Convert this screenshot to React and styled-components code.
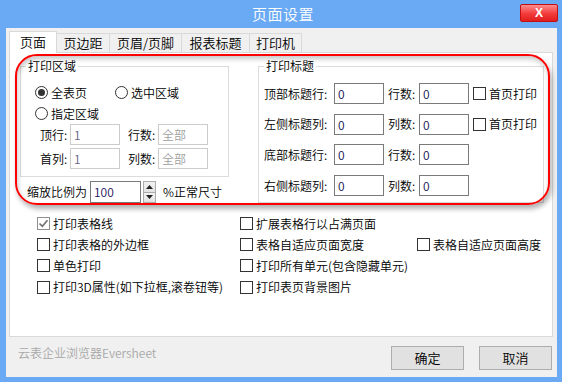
import React from "react";
import styled, { createGlobalStyle } from "styled-components";

const GlobalStyle = createGlobalStyle`
  html, body {
    margin: 0;
    padding: 0;
    background: #ffffff;
  }
  * {
    box-sizing: border-box;
  }
`;

const FONT = `"Noto Sans CJK SC", "Microsoft YaHei", "Noto Sans", sans-serif`;

const titleRows = [
  { label: "顶部标题行:", count: "行数:", firstPage: true },
  { label: "左侧标题列:", count: "列数:", firstPage: true },
  { label: "底部标题行:", count: "行数:", firstPage: false },
  { label: "右侧标题列:", count: "列数:", firstPage: false },
];

const options = [
  { text: "打印表格线", checked: true },
  { text: "扩展表格行以占满页面" },
  null,
  { text: "打印表格的外边框" },
  { text: "表格自适应页面宽度" },
  { text: "表格自适应页面高度" },
  { text: "单色打印" },
  { text: "打印所有单元(包含隐藏单元)" },
  null,
  { text: "打印3D属性(如下拉框,滚卷钮等)" },
  { text: "打印表页背景图片" },
  null,
];

const tabs = ["页面", "页边距", "页眉/页脚", "报表标题", "打印机"];
const tabWidths = [48, 53, 73, 69, 53];

const Check = ({ checked }) => (
  <CheckBox $checked={checked}>
    {checked && (
      <svg width="11" height="11" viewBox="0 0 11 11">
        <path d="M1.5 5.5 L4.3 8.3 L9.5 2.2" fill="none" stroke="#6f6f6f" strokeWidth="1.6" />
      </svg>
    )}
  </CheckBox>
);

const Radio = ({ checked, children }) => (
  <RadioItem>
    <RadioCircle>{checked && <RadioDot />}</RadioCircle>
    <span>{children}</span>
  </RadioItem>
);

export default function App() {
  return (
    <>
      <GlobalStyle />
      <Window>
        <TitleBar>
          <Title>页面设置</Title>
          <CloseButton>X</CloseButton>
        </TitleBar>
        <Body>
          <TabBar>
            {tabs.map((t, i) => (
              <Tab key={t} $active={i === 0} $w={tabWidths[i]}>
                {t}
              </Tab>
            ))}
          </TabBar>
          <Panel>
            <TopSection>
              <LeftColumn>
                <Group>
                  <Legend>打印区域</Legend>
                  <AreaBody>
                    <RadioGrid>
                      <Radio checked>全表页</Radio>
                      <Radio>选中区域</Radio>
                      <Radio>指定区域</Radio>
                    </RadioGrid>
                    <FieldRow>
                      <FieldLabel>顶行:</FieldLabel>
                      <TextBox $disabled>1</TextBox>
                      <FieldLabel $gap>行数:</FieldLabel>
                      <TextBox $disabled $placeholder>全部</TextBox>
                    </FieldRow>
                    <FieldRow $top={3}>
                      <FieldLabel>首列:</FieldLabel>
                      <TextBox $disabled>1</TextBox>
                      <FieldLabel $gap>列数:</FieldLabel>
                      <TextBox $disabled $placeholder>全部</TextBox>
                    </FieldRow>
                  </AreaBody>
                </Group>
                <ZoomRow>
                  <span>缩放比例为</span>
                  <ZoomInput>100</ZoomInput>
                  <Spinner>
                    <SpinButton>
                      <svg width="7" height="4" viewBox="0 0 7 4">
                        <path d="M0 4 L3.5 0 L7 4 Z" fill="#222" />
                      </svg>
                    </SpinButton>
                    <SpinButton>
                      <svg width="7" height="4" viewBox="0 0 7 4">
                        <path d="M0 0 L3.5 4 L7 0 Z" fill="#222" />
                      </svg>
                    </SpinButton>
                  </Spinner>
                  <ZoomSuffix>%正常尺寸</ZoomSuffix>
                </ZoomRow>
              </LeftColumn>
              <TitleGroup>
                <Legend>打印标题</Legend>
                <TitleBody>
                  {titleRows.map((r) => (
                    <TitleRow key={r.label}>
                      <TitleLabel>{r.label}</TitleLabel>
                      <TextBox>0</TextBox>
                      <CountLabel>{r.count}</CountLabel>
                      <TextBox>0</TextBox>
                      {r.firstPage && (
                        <FirstPage>
                          <Check />
                          <span>首页打印</span>
                        </FirstPage>
                      )}
                    </TitleRow>
                  ))}
                </TitleBody>
              </TitleGroup>
            </TopSection>
            <OptionGrid>
              {options.map((o, i) =>
                o ? (
                  <OptionItem key={i}>
                    <Check checked={o.checked} />
                    <span>{o.text}</span>
                  </OptionItem>
                ) : (
                  <span key={i} />
                )
              )}
            </OptionGrid>
          </Panel>
          <Footer>
            <Brand>云表企业浏览器Eversheet</Brand>
            <ButtonGroup>
              <Button>确定</Button>
              <Button>取消</Button>
            </ButtonGroup>
          </Footer>
        </Body>
        <Highlight />
      </Window>
    </>
  );
}

const Window = styled.div`
  position: relative;
  width: 562px;
  height: 382px;
  background: #6aa9f3;
  display: flex;
  flex-direction: column;
  font-family: ${FONT};
  font-size: 12px;
  font-weight: 350;
  color: #000;
`;

const TitleBar = styled.div`
  height: 28px;
  display: grid;
  grid-template-columns: 1fr auto 1fr;
  align-items: center;
`;

const Title = styled.div`
  grid-column: 2;
  color: #ffffff;
  font-size: 15px;
  line-height: 18px;
  letter-spacing: 0.5px;
  margin-left: 4px;
`;

const CloseButton = styled.div`
  grid-column: 3;
  justify-self: end;
  align-self: start;
  margin: 4px 4px 0 0;
  width: 38px;
  height: 18px;
  border: 1px solid #c21010;
  border-radius: 2px;
  background: linear-gradient(#ff8c8c, #f23a3a 55%, #e01e1e);
  color: #fff;
  font-family: "Liberation Sans", Arial, sans-serif;
  font-weight: bold;
  font-size: 12px;
  line-height: 16px;
  text-align: center;
`;

const Body = styled.div`
  flex: 1;
  margin: 0 5px 5px 6px;
  background: #f0f0f0;
  padding: 3px 4px 0 3px;
  display: flex;
  flex-direction: column;
`;

const TabBar = styled.div`
  display: flex;
  align-items: flex-end;
  height: 21px;
`;

const Tab = styled.div`
  position: relative;
  z-index: ${(p) => (p.$active ? 2 : 1)};
  width: ${(p) => p.$w}px;
  height: ${(p) => (p.$active ? 22 : 19)}px;
  margin-bottom: ${(p) => (p.$active ? -1 : 0)}px;
  margin-left: ${(p) => (p.$active ? 0 : -1)}px;
  background: ${(p) => (p.$active ? "#ffffff" : "#f0f0f0")};
  border: 1px solid #d9d9d9;
  border-bottom: none;
  font-size: 13px;
  line-height: ${(p) => (p.$active ? 19 : 18)}px;
  text-align: center;
  &:nth-child(2) {
    margin-left: 0;
    border-left: none;
  }
`;

const Panel = styled.div`
  height: 285px;
  background: #ffffff;
  border: 1px solid #d9d9d9;
  padding: 5px 0 0 10px;
`;

const TopSection = styled.div`
  display: flex;
  align-items: stretch;
  gap: 29px;
`;

const LeftColumn = styled.div`
  width: 209px;
  display: flex;
  flex-direction: column;
`;

const Group = styled.fieldset`
  margin: 0;
  padding: 0;
  border: 1px solid #dcdcdc;
  min-width: 0;
`;

const TitleGroup = styled(Group)`
  width: 286px;
`;

const Legend = styled.legend`
  margin-left: 5px;
  padding: 0 2px;
  font-size: 12px;
  line-height: 16px;
`;

const AreaBody = styled.div`
  padding: 8px 0 7px 14px;
`;

const RadioGrid = styled.div`
  display: grid;
  grid-template-columns: 80px auto;
  grid-auto-rows: 21px;
`;

const RadioItem = styled.div`
  display: flex;
  align-items: center;
  gap: 3px;
  line-height: 16px;
`;

const RadioCircle = styled.span`
  width: 13px;
  height: 13px;
  border: 1px solid #333;
  border-radius: 50%;
  background: #fff;
  display: flex;
  align-items: center;
  justify-content: center;
`;

const RadioDot = styled.span`
  width: 7px;
  height: 7px;
  border-radius: 50%;
  background: #333;
`;

const FieldRow = styled.div`
  display: flex;
  align-items: center;
  height: 21px;
  margin: ${(p) => p.$top || 0}px 0 0 5px;
`;

const FieldLabel = styled.span`
  width: 30px;
  margin-left: ${(p) => (p.$gap ? 8 : 0)}px;
  line-height: 16px;
`;

const TextBox = styled.div`
  width: 50px;
  height: 21px;
  border: 1px solid ${(p) => (p.$disabled ? "#cccccc" : "#7a7a7a")};
  background: #fff;
  padding: 0 3px;
  line-height: 19px;
  font-family: ${FONT};
  color: ${(p) => (p.$placeholder ? "#a0a0a0" : p.$disabled ? "#6a5f8a" : "#101050")};
`;

const ZoomRow = styled.div`
  display: flex;
  align-items: center;
  height: 22px;
  margin-top: 4px;
  padding-left: 7px;
  line-height: 16px;
`;

const ZoomInput = styled.div`
  width: 51px;
  height: 22px;
  margin-left: 3px;
  border: 1px solid #7a7a7a;
  background: #fff;
  padding: 0 3px;
  line-height: 20px;
  color: #1a1060;
`;

const Spinner = styled.div`
  width: 13px;
  height: 22px;
  margin-left: 2px;
  display: flex;
  flex-direction: column;
  gap: 0;
`;

const SpinButton = styled.div`
  flex: 1;
  border: 1px solid #acacac;
  background: linear-gradient(#f2f2f2, #e3e3e3);
  display: flex;
  align-items: center;
  justify-content: center;
  & + & {
    border-top: none;
  }
`;

const ZoomSuffix = styled.span`
  margin-left: 7px;
`;

const TitleBody = styled.div`
  padding: 9px 0 0 5px;
  display: flex;
  flex-direction: column;
  gap: 9.7px;
`;

const TitleRow = styled.div`
  display: flex;
  align-items: center;
  height: 21px;
  line-height: 16px;
`;

const TitleLabel = styled.span`
  width: 70px;
`;

const CountLabel = styled.span`
  width: 31px;
  margin-left: 4px;
`;

const FirstPage = styled.div`
  display: flex;
  align-items: center;
  gap: 3px;
  margin-left: 4px;
`;

const CheckBox = styled.span`
  width: 13px;
  height: 13px;
  flex-shrink: 0;
  border: 1px solid ${(p) => (p.$checked ? "#8f8f8f" : "#333333")};
  background: #fff;
  display: flex;
  align-items: center;
  justify-content: center;
`;

const OptionGrid = styled.div`
  display: grid;
  grid-template-columns: 203px 177px auto;
  grid-template-rows: 21px 21px 21px 22px;
  margin-top: 10px;
  padding-left: 17px;
`;

const OptionItem = styled.div`
  display: flex;
  align-items: center;
  gap: 3px;
  line-height: 16px;
  white-space: nowrap;
`;

const Footer = styled.div`
  display: flex;
  align-items: flex-start;
  padding: 0 1px 0 9px;
`;

const Brand = styled.div`
  margin-top: 9px;
  line-height: 14px;
  color: #a8a8a8;
`;

const ButtonGroup = styled.div`
  margin: 9px 0 0 auto;
  display: flex;
  gap: 15px;
`;

const Button = styled.div`
  width: 73px;
  height: 24px;
  border: 1px solid #adadad;
  background: #e1e1e1;
  text-align: center;
  line-height: 22px;
  font-size: 13px;
`;

const Highlight = styled.div`
  position: absolute;
  left: 15px;
  top: 54px;
  width: 535px;
  height: 151px;
  border: 2px solid #ff0000;
  border-radius: 22px;
  box-shadow: 2px 4px 5px rgba(0, 0, 0, 0.3), inset 1px 3px 5px rgba(0, 0, 0, 0.22);
  pointer-events: none;
`;
